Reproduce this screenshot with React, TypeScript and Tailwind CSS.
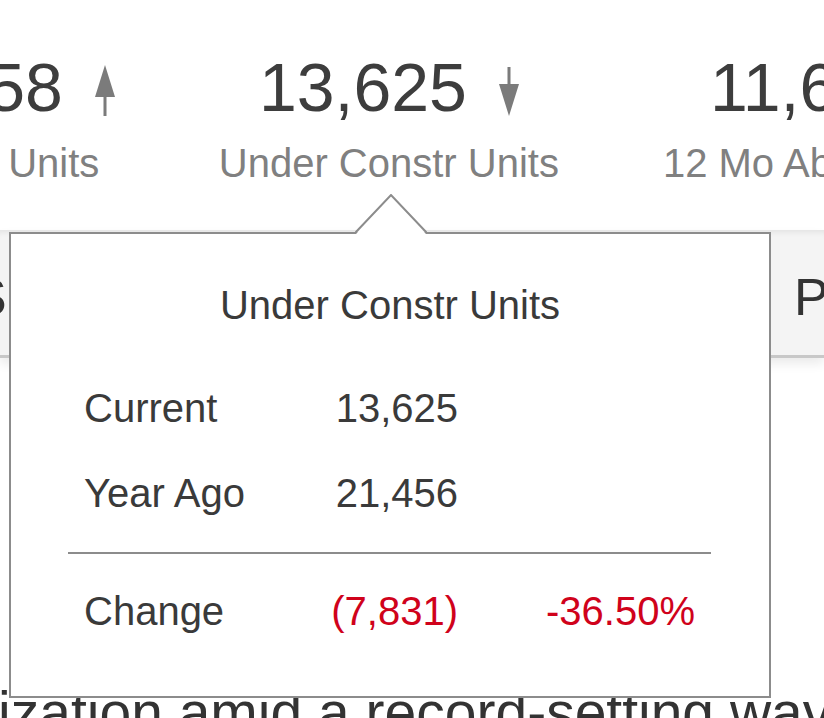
import React from 'react'

type Dir = 'up' | 'down'

interface StatProps {
  value: string
  label: string
  dir: Dir
}

const STATS: StatProps[] = [
  { value: '312,858', label: 'Inventory Units', dir: 'up' },
  { value: '13,625', label: 'Under Constr Units', dir: 'down' },
  { value: '11,648', label: '12 Mo Absorp Units', dir: 'up' },
]

function TrendArrow({ dir }: { dir: Dir }) {
  return (
    <svg width="20" height="52" viewBox="0 0 20 52" className="mt-[12px] shrink-0 fill-[#7b7b7b]">
      {dir === 'down' ? (
        <>
          <rect x="8.5" y="2" width="3" height="18" />
          <polygon points="0,19 20,19 10,51" />
        </>
      ) : (
        <>
          <polygon points="10,0 20,32 0,32" />
          <rect x="8.5" y="31" width="3" height="20" />
        </>
      )}
    </svg>
  )
}

function Stat({ value, label, dir }: StatProps) {
  return (
    <div className="flex flex-col items-center shrink-0">
      <div className="flex items-start gap-[32px]">
        <span className="text-[68px] leading-none text-[#3d3d3d]">{value}</span>
        <TrendArrow dir={dir} />
      </div>
      <span className="mt-[22px] text-[40px] leading-none text-[#808080]">{label}</span>
    </div>
  )
}

function TableRow({ label, value, pct, red }: { label: string; value: string; pct?: string; red?: boolean }) {
  const tone = red ? 'text-[#d0021b]' : 'text-[#3a3a3a]'
  return (
    <div className="grid grid-cols-[180px_194px_1fr] px-[16px] whitespace-nowrap text-[40px] leading-none">
      <span className="text-[#3a3a3a]">{label}</span>
      <span className={`text-right ${tone}`}>{value}</span>
      <span className={`text-right ${tone}`}>{pct}</span>
    </div>
  )
}

function StatPopup() {
  return (
    <div className="absolute left-[9px] top-[232px] w-[762px] h-[466px] border-2 border-[#8c8c8c] bg-white">
      {/* pointer up to the selected stat */}
      <svg width="72" height="40" viewBox="0 0 72 40" className="absolute left-[344px] top-[-40px]">
        <polygon points="1,40 36,2 71,40" fill="#ffffff" />
        <polyline points="0,39 36,1 72,39" fill="none" stroke="#8c8c8c" strokeWidth="2" />
      </svg>

      <div className="flex flex-col pt-[51px]">
        <h2 className="text-center text-[40px] leading-none font-normal text-[#3a3a3a]">Under Constr Units</h2>

        <div className="flex flex-col ml-[57px] mr-[58px] mt-[63px]">
          <TableRow label="Current" value="13,625" />
          <div className="mt-[45px]">
            <TableRow label="Year Ago" value="21,456" />
          </div>
          <div className="mt-[39px] h-[2px] bg-[#8c8c8c]" />
          <div className="mt-[37px]">
            <TableRow label="Change" value="(7,831)" pct="-36.50%" red />
          </div>
        </div>
      </div>
    </div>
  )
}

export default function App() {
  return (
    <div className="relative w-[824px] h-[718px] overflow-hidden bg-white font-['Liberation_Sans',Arial,sans-serif]">
      {/* Stat strip */}
      <div className="h-[230px] pt-[53px] whitespace-nowrap">
        <div className="flex gap-[104px] -ml-[183px]">
          {STATS.map((s) => (
            <Stat key={s.label} {...s} />
          ))}
        </div>
      </div>

      {/* Tabs */}
      <div className="h-[128px] bg-[#f4f4f4] border-b-[3px] border-[#c8c8c8] shadow-[inset_0_7px_6px_-5px_rgba(0,0,0,0.08),0_6px_10px_rgba(0,0,0,0.08)]">
        <div className="flex items-start gap-[161px] -ml-[28px] pt-[41px] whitespace-nowrap text-[52px] leading-none text-[#333]">
          <span>Summary</span>
          <span>Submarkets</span>
          <span>Properties</span>
        </div>
      </div>

      {/* Body copy */}
      <p className="mt-[326px] -ml-[135px] whitespace-nowrap text-[57px] leading-none text-[#333]">
        stabilization amid a record-setting wave of new supply
      </p>

      <StatPopup />
    </div>
  )
}
